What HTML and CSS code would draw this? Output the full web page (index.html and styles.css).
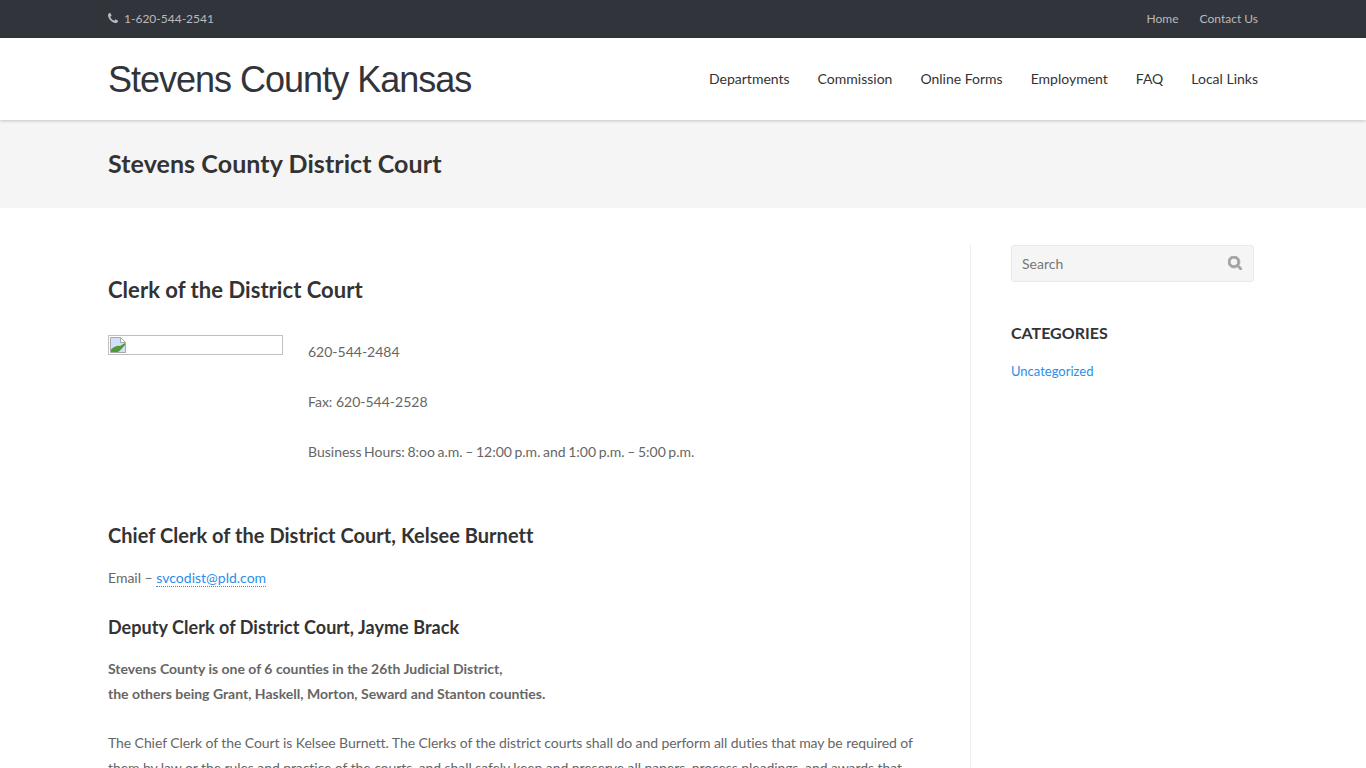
FILE: index.html
```html
<!DOCTYPE html>
<html lang="en">
  <head>
    <meta charset="UTF-8" />
    <title>Stevens County District Court</title>
    <link rel="stylesheet" href="styles.css">
  </head>
  <body>
    <!-- TOP BAR -->
    <div class="topbar">
      <div class="container topbar-inner">
        <span class="phone">
          <svg class="phone-icon" viewBox="0 0 1408 1408" aria-hidden="true"><path d="M1408 1112q0 27-10 70.500t-21 68.500q-21 50-122 106-94 51-186 51-27 0-53-3.500t-57.500-12.500-47-14.500-55.500-20.500-49-18q-98-35-175-83-127-79-264-216t-216-264q-48-77-83-175-3-9-18-49t-20.500-55.500-14.500-47-12.500-57.500-3.500-53q0-92 51-186 56-101 106-122 25-11 68.500-21t70.500-10q14 0 21 3 18 6 53 76 11 19 30 54t35 63.500 31 53.500q3 4 17.500 25t21.500 35.500 7 28.500q0 20-28.500 50t-62 55-62 53-28.500 46q0 9 5 22.500t8.500 20.500 14 24 11.500 19q76 137 174 235t235 174q2 1 19 11.500t24 14 20.500 8.500 22.500 5q18 0 46-28.500t53-62 55-62 50-28.500q14 0 28.500 7t35.500 21.500 25 17.500q25 15 53.500 31t63.500 35 54 30q70 35 76 53 3 7 3 21z"/></svg>
          1-620-544-2541
        </span>
        <nav class="topnav">
          <a href="#">Home</a>
          <a href="#">Contact Us</a>
        </nav>
      </div>
    </div>

    <!-- HEADER -->
    <header class="site-header">
      <div class="container header-inner">
        <a class="logo" href="#">Stevens County Kansas</a>
        <nav class="mainnav">
          <a href="#">Departments</a>
          <a href="#">Commission</a>
          <a href="#">Online Forms</a>
          <a href="#">Employment</a>
          <a href="#">FAQ</a>
          <a href="#">Local Links</a>
        </nav>
      </div>
    </header>

    <!-- PAGE TITLE -->
    <div class="page-title">
      <div class="container">
        <h1>Stevens County District Court</h1>
      </div>
    </div>

    <!-- MAIN -->
    <div class="container layout">
      <main class="content">
        <h2>Clerk of the District Court</h2>
        <div class="clerk">
          <div class="broken-img">
            <svg viewBox="0 0 16 16" aria-hidden="true">
              <path d="M0.500 0.500H10.500L15.500 5.500V15.500H0.500Z" fill="#d3e0f7" stroke="#a9a9a9"/>
              <path d="M10.500 0.500V5.500H15.500Z" fill="#fff" stroke="#a9a9a9"/>
              <path d="M1 15V12.500Q6 8 10 9L15 6V8Q10 14 8 15Z" fill="#4f9a3a"/>
            </svg>
          </div>
          <div class="clerk-info">
            <p>620-544-2484</p>
            <p>Fax: 620-544-2528</p>
            <p class="hours">Business Hours: 8:oo a.m. – 12:00 p.m. and 1:00 p.m. – 5:00 p.m.</p>
          </div>
        </div>

        <h3>Chief Clerk of the District Court, Kelsee Burnett</h3>
        <p class="email">Email – <a href="#">svcodist@pld.com</a></p>
        <h4>Deputy Clerk of District Court, Jayme Brack</h4>
        <p class="district"><strong>Stevens County is one of 6 counties in the 26th Judicial District,<br>the others being Grant, Haskell, Morton, Seward and Stanton counties.</strong></p>
        <p class="duties">The Chief Clerk of the Court is Kelsee Burnett. The Clerks of the district courts shall do and perform all duties that may be required of them by law or the rules and practice of the courts, and shall safely keep and preserve all papers, process pleadings, and awards that</p>
      </main>

      <aside class="sidebar">
        <form class="search">
          <input type="text" placeholder="Search">
          <svg class="search-icon" viewBox="0 0 1664 1664" aria-hidden="true"><path d="M1152 704q0-185-131.500-316.500T704 256 387.500 387.500 256 704t131.500 316.500T704 1152t316.500-131.500T1152 704zm512 832q0 52-38 90t-90 38q-54 0-90-38l-343-342q-179 124-399 124-143 0-273.500-55.500t-225-150-150-225T0 704t55.500-273.500 150-225 225-150T704 0t273.500 55.500 225 150 150 225T1408 704q0 220-124 399l343 343q37 37 37 90z"/></svg>
        </form>
        <h5>Categories</h5>
        <a class="cat-link" href="#">Uncategorized</a>
      </aside>
    </div>
  </body>
</html>
```

FILE: styles.css
```css
/* Global */
* {
  box-sizing: border-box;
}
html, body {
  height: 768px;
  overflow: hidden;
}
body {
  margin: 0;
  font-family: Lato, sans-serif;
  font-size: 14px;
  line-height: 25px;
  color: #666;
  background: #fff;
}
a {
  color: inherit;
  text-decoration: none;
}
.container {
  width: 1150px;
  margin: 0 auto;
}

/* Top bar */
.topbar {
  height: 38px;
  background: #31343a;
  color: #b9babc;
  font-size: 12px;
}
.topbar-inner {
  height: 38px;
  padding-bottom: 2px;
  display: flex;
  justify-content: space-between;
  align-items: center;
}
.phone {
  display: flex;
  align-items: center;
  gap: 6px;
}
.phone-icon {
  width: 10px;
  height: 10px;
  fill: #b9babc;
}
.topnav {
  display: flex;
  gap: 21px;
}

/* Header */
.site-header {
  position: relative;
  height: 82px;
  background: #fff;
  box-shadow: 0 1px 3px rgba(0, 0, 0, 0.2);
}
.header-inner {
  height: 82px;
  display: flex;
  justify-content: space-between;
  align-items: center;
}
.logo {
  font-family: "Liberation Sans", Arial, sans-serif;
  font-size: 36px;
  letter-spacing: -1px;
  color: #31343a;
}
.mainnav {
  display: flex;
  gap: 28px;
  padding-bottom: 2px;
  color: #333;
}

/* Page title */
.page-title {
  height: 88px;
  padding-bottom: 2px;
  background: #f5f5f5;
  display: flex;
  align-items: center;
}
.page-title h1 {
  margin: 0;
  font-size: 25px;
  font-weight: 700;
  line-height: 30px;
  letter-spacing: 0.08px;
  color: #333;
}

/* Layout */
.layout {
  display: flex;
  margin-top: 36px;
}
.content {
  width: 863px;
  padding: 30px 40px 0 0;
  border-right: 1px solid #eee;
}
.content p {
  margin: 0 0 25px;
}
.content a {
  color: #2b8ee8;
  border-bottom: 1px dotted #2b8ee8;
}
h2, h3, h4 {
  margin: 0;
  color: #333;
  font-weight: 700;
}
h2 {
  font-size: 22px;
  line-height: 32px;
  letter-spacing: 0.04px;
}
h3 {
  font-size: 20px;
  line-height: 30px;
  letter-spacing: 0.03px;
}
h4 {
  font-size: 18px;
  line-height: 28px;
  letter-spacing: 0.05px;
}
.clerk {
  display: flex;
  margin-top: 28px;
  height: 186px;
}
.broken-img {
  width: 175px;
  height: 20px;
  margin: 1px 25px 0 0;
  border: 1px solid #c0c0c0;
  padding: 1px;
  line-height: 0;
}
.broken-img svg {
  width: 16px;
  height: 16px;
}
.clerk-info {
  padding-top: 5px;
}
.clerk-info p {
  margin-bottom: 25px;
}
.content .hours {
  word-spacing: -1px;
}
.content .email {
  margin: 15px 0 23px;
}
.content .district {
  margin-top: 15px;
  margin-bottom: 24px;
}
.content .duties {
  letter-spacing: -0.08px;
}

/* Sidebar */
.sidebar {
  width: 243px;
  margin-left: 40px;
  padding-top: 1px;
}
.search {
  position: relative;
  height: 37px;
}
.search input {
  width: 100%;
  height: 37px;
  padding: 0 40px 0 10px;
  font-family: inherit;
  font-size: 14px;
  color: #555;
  background: #f5f5f5;
  border: 1px solid #e9e9e9;
  border-radius: 3px;
  outline: none;
}
.search input::placeholder {
  color: #777;
}
.search-icon {
  position: absolute;
  top: 11px;
  right: 12px;
  width: 14px;
  height: 14px;
  fill: #a3a3a3;
  stroke: #a3a3a3;
  stroke-width: 100;
}
h5 {
  margin: 37px 0 11px;
  font-size: 16px;
  line-height: 28px;
  font-weight: 700;
  text-transform: uppercase;
  color: #333;
}
.cat-link {
  font-size: 13px;
  color: #2b8ee8;
}
```
